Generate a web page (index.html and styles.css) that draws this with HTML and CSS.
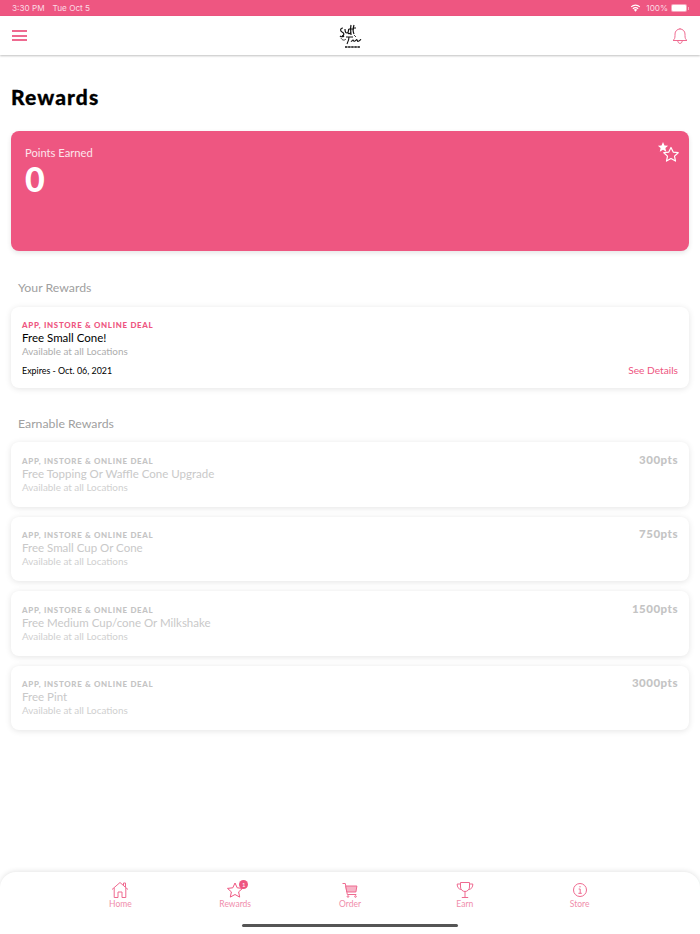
FILE: index.html
```html
<!DOCTYPE html>
<html lang="en">
<head>
    <meta charset="UTF-8">
    <meta name="viewport" content="width=device-width, initial-scale=1.0">
    <title>Rewards</title>
    <link rel="stylesheet" href="styles.css">
</head>
<body>
    <div class="status-bar">
        <div class="status-left">
            <span>3:30 PM</span>
            <span>Tue Oct 5</span>
        </div>
        <div class="status-right">
            <svg class="wifi-icon" viewBox="0 0 14 10" width="11" height="8">
                <path d="M7 9.8 4.9 7.3a3.2 3.2 0 0 1 4.2 0z" fill="#fff"/>
                <path d="M3.6 5.9a5.2 5.2 0 0 1 6.8 0M1.5 3.5a8.2 8.2 0 0 1 11 0" fill="none" stroke="#fff" stroke-width="1.5"/>
            </svg>
            <span>100%</span>
            <div class="battery"><div class="battery-fill"></div></div>
            <div class="battery-tip"></div>
        </div>
    </div>

    <header class="nav-bar">
        <div class="menu-button">
            <span></span>
            <span></span>
            <span></span>
        </div>
        <svg class="logo" viewBox="0 0 24 24" width="24" height="24" fill="none" stroke="#111">
            <path d="M5 4c-3 0-3 3-1 4s3 3 0 4M2 12c1 1 3 1 4 0M7 5c0 2 0 4 2 4s1-3 2-4M10 9c1 1 2 1 3-1M13 1c-1 4 0 7 0 10M11 5h5M16 1c-1 3-1 7 0 9M15 4h3" stroke-width="1.200"/>
            <path d="M8 13h7M11 13c0 3-1 5-2 7M13 17c1 1 1-1 2-1s0 2 2 1 1-2 2-1 0 2 2 1 1-2 2-1" stroke-width="1.100"/>
            <path d="M3 14c1 2 3 3 5 1M16 11l2 2" stroke-width=".8"/>
            <path d="M7 23h15" stroke-width="1.500" stroke-dasharray="2.500 .6"/>
        </svg>
        <svg class="bell-icon" viewBox="0 0 16 18" width="16" height="18" fill="none" stroke="#ef6a90" stroke-width="1">
            <path d="M1 13.5c1.500-1 2-2.500 2-5V7a5 5 0 0 1 10 0v1.500c0 2.500.5 4 2 5z" stroke-linejoin="round"/>
            <path d="M5.800 13.700c0 3.600 4.400 3.600 4.400 0"/>
            <path d="M8 2V1"/>
        </svg>
    </header>

    <main class="content">
        <h1 class="page-title">Rewards</h1>

        <section class="points-card">
            <div>
                <p class="points-label">Points Earned</p>
                <p class="points-value">0</p>
            </div>
            <svg class="points-stars" viewBox="0 0 22 24" width="22" height="24">
                <path d="M6 1l1.500 3.400 3.600.3-2.700 2.400.8 3.600L6 8.800l-3.200 1.900.8-3.600L.9 4.700l3.600-.3z" fill="#fff"/>
                <path d="M14 6.500l2.200 4.600 5 .6-3.700 3.400 1 5-4.500-2.500-4.500 2.500 1-5-3.700-3.400 5-.6z" fill="none" stroke="#fff" stroke-width="1.200" stroke-linejoin="round"/>
            </svg>
        </section>

        <h2 class="section-title">Your Rewards</h2>
        <div class="reward-card reward-active">
            <p class="reward-tag">APP, INSTORE &amp; ONLINE DEAL</p>
            <p class="reward-name">Free Small Cone!</p>
            <p class="reward-place">Available at all Locations</p>
            <div class="reward-foot">
                <span class="reward-expires">Expires - Oct. 06, 2021</span>
                <span class="reward-link">See Details</span>
            </div>
        </div>

        <h2 class="section-title section-title-earn">Earnable Rewards</h2>
        <div class="reward-list">
            <div class="reward-card reward-locked">
                <div>
                    <p class="reward-tag">APP, INSTORE &amp; ONLINE DEAL</p>
                    <p class="reward-name">Free Topping Or Waffle Cone Upgrade</p>
                    <p class="reward-place">Available at all Locations</p>
                </div>
                <span class="reward-points">300pts</span>
            </div>
            <div class="reward-card reward-locked">
                <div>
                    <p class="reward-tag">APP, INSTORE &amp; ONLINE DEAL</p>
                    <p class="reward-name">Free Small Cup Or Cone</p>
                    <p class="reward-place">Available at all Locations</p>
                </div>
                <span class="reward-points">750pts</span>
            </div>
            <div class="reward-card reward-locked">
                <div>
                    <p class="reward-tag">APP, INSTORE &amp; ONLINE DEAL</p>
                    <p class="reward-name">Free Medium Cup/cone Or Milkshake</p>
                    <p class="reward-place">Available at all Locations</p>
                </div>
                <span class="reward-points">1500pts</span>
            </div>
            <div class="reward-card reward-locked">
                <div>
                    <p class="reward-tag">APP, INSTORE &amp; ONLINE DEAL</p>
                    <p class="reward-name">Free Pint</p>
                    <p class="reward-place">Available at all Locations</p>
                </div>
                <span class="reward-points">3000pts</span>
            </div>
        </div>
    </main>

    <footer class="tab-bar">
        <nav class="tabs">
            <div class="tab">
                <svg viewBox="0 0 18 18" width="18" height="18" fill="none" stroke="#ef6a90" stroke-width="1" stroke-linejoin="round">
                    <path d="M1 8.500 9 1.500l8 7M3.200 7v9.500h3.800V11h4v5.500h3.800V7M12.500 4.500V2h2v4.300"/>
                </svg>
                <span>Home</span>
            </div>
            <div class="tab">
                <div class="tab-icon-wrap">
                    <svg viewBox="0 0 18 18" width="18" height="18" fill="none" stroke="#ef5681" stroke-width="1" stroke-linejoin="round">
                        <path d="M9 2l2.200 4.800 5.300.6-3.900 3.500 1.100 5.200L9 13.500l-4.700 2.600 1.100-5.200L1.500 7.400l5.300-.6z"/>
                    </svg>
                    <span class="tab-badge">1</span>
                </div>
                <span>Rewards</span>
            </div>
            <div class="tab">
                <svg viewBox="0 0 18 18" width="18" height="18" fill="none" stroke="#ef6a90" stroke-width="1" stroke-linejoin="round">
                    <path d="M1.500 2.500h2.800l2 11h9"/>
                    <path d="M4.700 5h11.200l-1 6H5.800z" fill="#f7b4c7"/>
                    <circle cx="7" cy="15.500" r=".8"/>
                    <circle cx="14.500" cy="15.500" r=".8"/>
                </svg>
                <span>Order</span>
            </div>
            <div class="tab">
                <svg viewBox="0 0 18 18" width="18" height="18" fill="none" stroke="#ef6a90" stroke-width="1" stroke-linejoin="round">
                    <path d="M4.500 1.500h9v4.500a4.500 4.500 0 0 1-9 0zM4.500 3H1.200c0 3 1 5 4 5.500M13.500 3h3.300c0 3-1 5-4 5.500M9 10.500v5.500M5.800 16.500h6.400"/>
                </svg>
                <span>Earn</span>
            </div>
            <div class="tab">
                <svg viewBox="0 0 18 18" width="18" height="18" fill="none" stroke="#ef6a90" stroke-width="1">
                    <circle cx="9" cy="9" r="6.500"/>
                    <path d="M7.700 8h1.500v4.300M7.400 12.300h3.400M9 5v1.400"/>
                </svg>
                <span>Store</span>
            </div>
        </nav>
        <div class="home-indicator"></div>
    </footer>
</body>
</html>
```

FILE: styles.css
```css
/* General */
* {
    box-sizing: border-box;
}

body {
    font-family: Lato, "Liberation Sans", sans-serif;
    margin: 0;
    width: 700px;
    height: 934px;
    display: flex;
    flex-direction: column;
    background-color: #fff;
    color: #000;
    overflow: hidden;
}

p,
h1,
h2 {
    margin: 0;
}

/* Status bar */
.status-bar {
    height: 16px;
    flex-shrink: 0;
    display: flex;
    justify-content: space-between;
    align-items: center;
    padding: 0 11px 0 12px;
    background-color: #ee5681;
    color: #fbdbe4;
    font-family: Inter, sans-serif;
    font-size: 8.200px;
}

.status-left {
    display: flex;
    gap: 8px;
}

.status-right {
    display: flex;
    align-items: center;
    gap: 2px;
}

.wifi-icon {
    margin-right: 3px;
}

.battery {
    width: 16px;
    height: 8px;
    margin-left: 1px;
    padding: 1px;
    border-radius: 2px;
    background-color: #f7a5bc;
}

.battery-fill {
    height: 100%;
    border-radius: 1px;
    background-color: #fff;
}

.battery-tip {
    width: 1px;
    height: 3px;
    margin-left: -1px;
    background-color: #f7a5bc;
}

/* Navigation */
.nav-bar {
    height: 39px;
    flex-shrink: 0;
    display: flex;
    justify-content: space-between;
    align-items: center;
    padding: 0 12px;
    background-color: #fff;
    box-shadow: 0 1px 2px rgba(0, 0, 0, 0.25);
}

.menu-button {
    width: 15px;
    display: flex;
    flex-direction: column;
    gap: 2.500px;
}

.menu-button span {
    height: 2px;
    background-color: #ee6a90;
}

/* Content */
.content {
    flex: 1;
    padding: 0 11px;
}

.page-title {
    margin-top: 29px;
    font-size: 21px;
    line-height: 25px;
    font-weight: 900;
    letter-spacing: 1.100px;
    -webkit-text-stroke: 0.3px #000;
}

.points-card {
    height: 120px;
    margin-top: 22px;
    display: flex;
    justify-content: space-between;
    align-items: flex-start;
    padding: 15px 10px 0 14px;
    border-radius: 8px;
    background-color: #ee5681;
    color: #fff;
    box-shadow: 0 2px 5px rgba(0, 0, 0, 0.1);
}

.points-label {
    font-size: 11.200px;
    line-height: 14px;
    color: #fde4eb;
}

.points-value {
    font-size: 34px;
    line-height: 37px;
    font-weight: 900;
}

.points-stars {
    margin-top: -5px;
}

.section-title {
    margin: 29px 0 11px 7px;
    font-size: 12.300px;
    line-height: 16px;
    font-weight: 400;
    color: #a0a0a0;
}

.section-title-earn {
    margin-top: 28px;
    margin-bottom: 10px;
}

/* Rewards */
.reward-card {
    padding: 13px 11px 0;
    border-radius: 8px;
    background-color: #fff;
    box-shadow: 0 1px 6px rgba(0, 0, 0, 0.11);
}

.reward-active {
    height: 81px;
}

.reward-list {
    display: flex;
    flex-direction: column;
    gap: 10px;
}

.reward-locked {
    height: 64.500px;
    padding-top: 13.500px;
    display: flex;
    justify-content: space-between;
    align-items: flex-start;
    color: #c9c9c9;
}

.reward-tag {
    font-size: 7.900px;
    line-height: 11px;
    font-weight: 900;
    letter-spacing: 0.700px;
    color: #ee5681;
}

.reward-name {
    font-size: 11.500px;
    line-height: 14px;
}

.reward-place {
    font-size: 9.900px;
    line-height: 12px;
    color: #adadad;
}

.reward-locked .reward-tag {
    color: #c4c4c4;
}

.reward-locked .reward-place {
    color: #d0d0d0;
}

.reward-foot {
    margin-top: 7px;
    display: flex;
    justify-content: space-between;
    align-items: center;
}

.reward-expires {
    font-size: 8.900px;
}

.reward-link {
    font-size: 10.200px;
    color: #ee5681;
}

.reward-points {
    margin-top: -3px;
    font-size: 11.500px;
    font-weight: 900;
    letter-spacing: 0.500px;
    color: #c4c4c4;
}

/* Tab bar */
.tab-bar {
    height: 62px;
    flex-shrink: 0;
    display: flex;
    flex-direction: column;
    align-items: center;
    border-radius: 16px 16px 0 0;
    background-color: #fff;
    box-shadow: 0 -1px 5px rgba(0, 0, 0, 0.1);
}

.tabs {
    width: 574px;
    margin-top: 9px;
    display: grid;
    grid-template-columns: repeat(5, 1fr);
}

.tab {
    display: flex;
    flex-direction: column;
    align-items: center;
    font-size: 8.500px;
    line-height: 11px;
    color: #f08dab;
}

.tab-icon-wrap {
    position: relative;
    height: 18px;
}

.tab-badge {
    position: absolute;
    top: -1px;
    right: -4px;
    width: 9px;
    height: 9px;
    border-radius: 50%;
    background-color: #ee5681;
    color: #fff;
    font-size: 6px;
    line-height: 9px;
    text-align: center;
}

.home-indicator {
    width: 216px;
    height: 3px;
    margin-top: 14px;
    border-radius: 2px;
    background-color: #555;
}
```
